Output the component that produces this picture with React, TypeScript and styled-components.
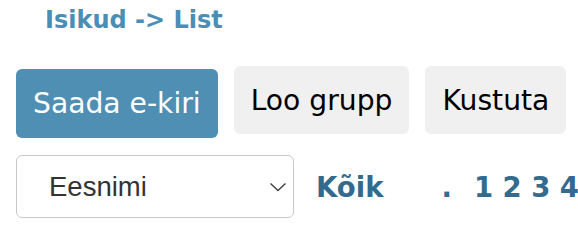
import React from 'react'
import styled, { createGlobalStyle } from 'styled-components'

const GlobalStyle = createGlobalStyle`
  html, body {
    margin: 0;
    padding: 0;
    background: #ffffff;
  }
  body {
    font-family: "DejaVu Sans", Verdana, sans-serif;
  }
`

const Page = styled.div`
  padding: 6px 0 0 16px;
  overflow: hidden;
`

const Title = styled.h1`
  margin: 0 0 32px 29px;
  font-size: 24px;
  font-weight: bold;
  line-height: normal;
  color: #4a8db5;
`

const Toolbar = styled.div`
  display: flex;
  align-items: flex-start;
  gap: 16px;
`

const ActionButton = styled.button<{ $primary?: boolean }>`
  display: flex;
  align-items: center;
  height: ${(p) => (p.$primary ? 69 : 68)}px;
  margin-top: ${(p) => (p.$primary ? 3 : 0)}px;
  padding: 0 17px;
  border: none;
  border-radius: 6px;
  font-family: "DejaVu Sans", Verdana, sans-serif;
  font-size: 28.2px;
  color: ${(p) => (p.$primary ? '#ffffff' : '#000000')};
  background: ${(p) => (p.$primary ? '#4f8fb3' : '#f0f0f0')};
  cursor: pointer;
  white-space: nowrap;
`

const FilterRow = styled.div`
  display: flex;
  align-items: center;
  margin-top: 17px;
  white-space: nowrap;
`

const SelectWrap = styled.div`
  position: relative;
  flex: none;
`

const Select = styled.select`
  appearance: none;
  -webkit-appearance: none;
  width: 278px;
  height: 63px;
  padding: 0 40px 0 32px;
  border: 1.5px solid #c8c8c8;
  border-radius: 6px;
  background: #ffffff;
  font-family: "Liberation Sans", Arial, sans-serif;
  font-size: 27.5px;
  color: #333333;
`

const Chevron = styled.svg`
  position: absolute;
  right: 7px;
  top: 50%;
  width: 18px;
  height: 10px;
  margin-top: -5px;
  pointer-events: none;
`

const Links = styled.div`
  display: flex;
  align-items: center;
  margin-left: 22px;
  font-size: 27.5px;
  font-weight: bold;
  color: #336b8f;
`

const PageLink = styled.a<{ $gap?: number }>`
  margin-left: ${(p) => p.$gap ?? 0}px;
  color: inherit;
  text-decoration: none;
`

const pages = ['1', '2', '3', '4', '5', '6']

export default function App() {
  return (
    <>
      <GlobalStyle />
      <Page>
        <Title>Isikud -&gt; List</Title>
        <Toolbar>
          <ActionButton $primary>Saada e-kiri</ActionButton>
          <ActionButton>Loo grupp</ActionButton>
          <ActionButton>Kustuta</ActionButton>
        </Toolbar>
        <FilterRow>
          <SelectWrap>
            <Select defaultValue="eesnimi">
              <option value="eesnimi">Eesnimi</option>
              <option value="perenimi">Perenimi</option>
            </Select>
            <Chevron viewBox="0 0 18 10" fill="none">
              <path d="M1.5 1.5 L9 8.5 L16.5 1.5" stroke="#444" strokeWidth="1.5" />
            </Chevron>
          </SelectWrap>
          <Links>
            <PageLink href="#">Kõik</PageLink>
            <PageLink href="#" $gap={58}>.</PageLink>
            {pages.map((n) => (
              <PageLink key={n} href="#" $gap={n === '1' ? 22 : 9.5}>
                {n}
              </PageLink>
            ))}
          </Links>
        </FilterRow>
      </Page>
    </>
  )
}
